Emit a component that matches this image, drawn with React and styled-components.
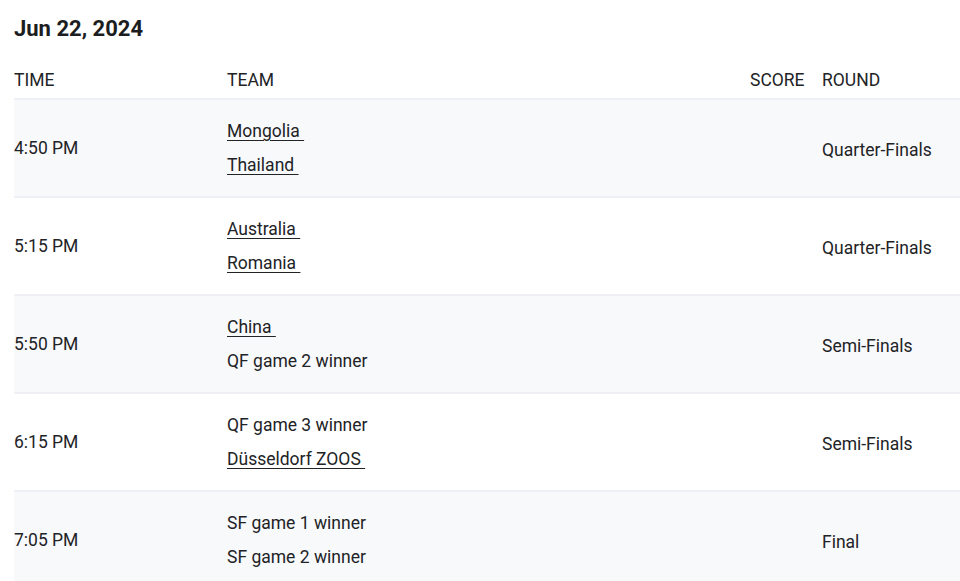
import styled, { createGlobalStyle } from "styled-components";

const GlobalStyle = createGlobalStyle`
  body {
    margin: 0;
    background: #ffffff;
    font-family: Roboto, "Liberation Sans", sans-serif;
    color: #222326;
  }
`;

const matches = [
  {
    time: "4:50 PM",
    teams: [
      { name: "Mongolia", link: true },
      { name: "Thailand", link: true },
    ],
    round: "Quarter-Finals",
  },
  {
    time: "5:15 PM",
    teams: [
      { name: "Australia", link: true },
      { name: "Romania", link: true },
    ],
    round: "Quarter-Finals",
  },
  {
    time: "5:50 PM",
    teams: [
      { name: "China", link: true },
      { name: "QF game 2 winner", link: false },
    ],
    round: "Semi-Finals",
  },
  {
    time: "6:15 PM",
    teams: [
      { name: "QF game 3 winner", link: false },
      { name: "Düsseldorf ZOOS", link: true },
    ],
    round: "Semi-Finals",
  },
  {
    time: "7:05 PM",
    teams: [
      { name: "SF game 1 winner", link: false },
      { name: "SF game 2 winner", link: false },
    ],
    round: "Final",
  },
];

const App = () => {
  return (
    <>
      <GlobalStyle />
      <Page>
        <DateTitle>Jun 22, 2024</DateTitle>
        <Schedule>
          <HeaderRow>
            <span>TIME</span>
            <span>TEAM</span>
            <span>SCORE</span>
            <span>ROUND</span>
          </HeaderRow>
          {matches.map((m, index) => (
            <MatchRow key={m.time} $striped={index % 2 === 0}>
              <Cell>{m.time}</Cell>
              <TeamCell>
                {m.teams.map((t) =>
                  t.link ? (
                    <TeamLink key={t.name} href="#">
                      {t.name + "\u00a0"}
                    </TeamLink>
                  ) : (
                    <TeamName key={t.name}>{t.name}</TeamName>
                  )
                )}
              </TeamCell>
              <Cell />
              <Cell $offset={4}>{m.round}</Cell>
            </MatchRow>
          ))}
        </Schedule>
      </Page>
    </>
  );
};

const Page = styled.div`
  padding: 16px 0 0 14px;
`;

const DateTitle = styled.h2`
  margin: 0 0 19px;
  font-size: 22px;
  line-height: 26px;
  font-weight: 700;
  color: #1c1d20;
`;

const Schedule = styled.div`
  display: flex;
  flex-direction: column;
`;

const columns = "213px 1fr 72px 138px";

const HeaderRow = styled.div`
  display: grid;
  grid-template-columns: ${columns};
  padding: 7px 0 5px;
  font-size: 17.5px;
  line-height: 25px;
  color: #222326;
  border-bottom: 2px solid #eef0f5;
`;

const MatchRow = styled.div`
  display: grid;
  grid-template-columns: ${columns};
  align-items: center;
  padding: 14px 0;
  background: ${(p) => (p.$striped ? "#f8f9fb" : "#ffffff")};
  border-bottom: 2px solid #eef0f5;
  font-size: 17.5px;
`;

const Cell = styled.div`
  line-height: 24px;
  padding-top: ${(p) => p.$offset || 0}px;
`;

const TeamCell = styled.div`
  display: flex;
  flex-direction: column;
  align-items: flex-start;
`;

const TeamLink = styled.a`
  line-height: 34px;
  color: #222326;
  text-decoration: underline;
  text-underline-offset: 3px;
`;

const TeamName = styled.span`
  line-height: 34px;
`;

export default App;
